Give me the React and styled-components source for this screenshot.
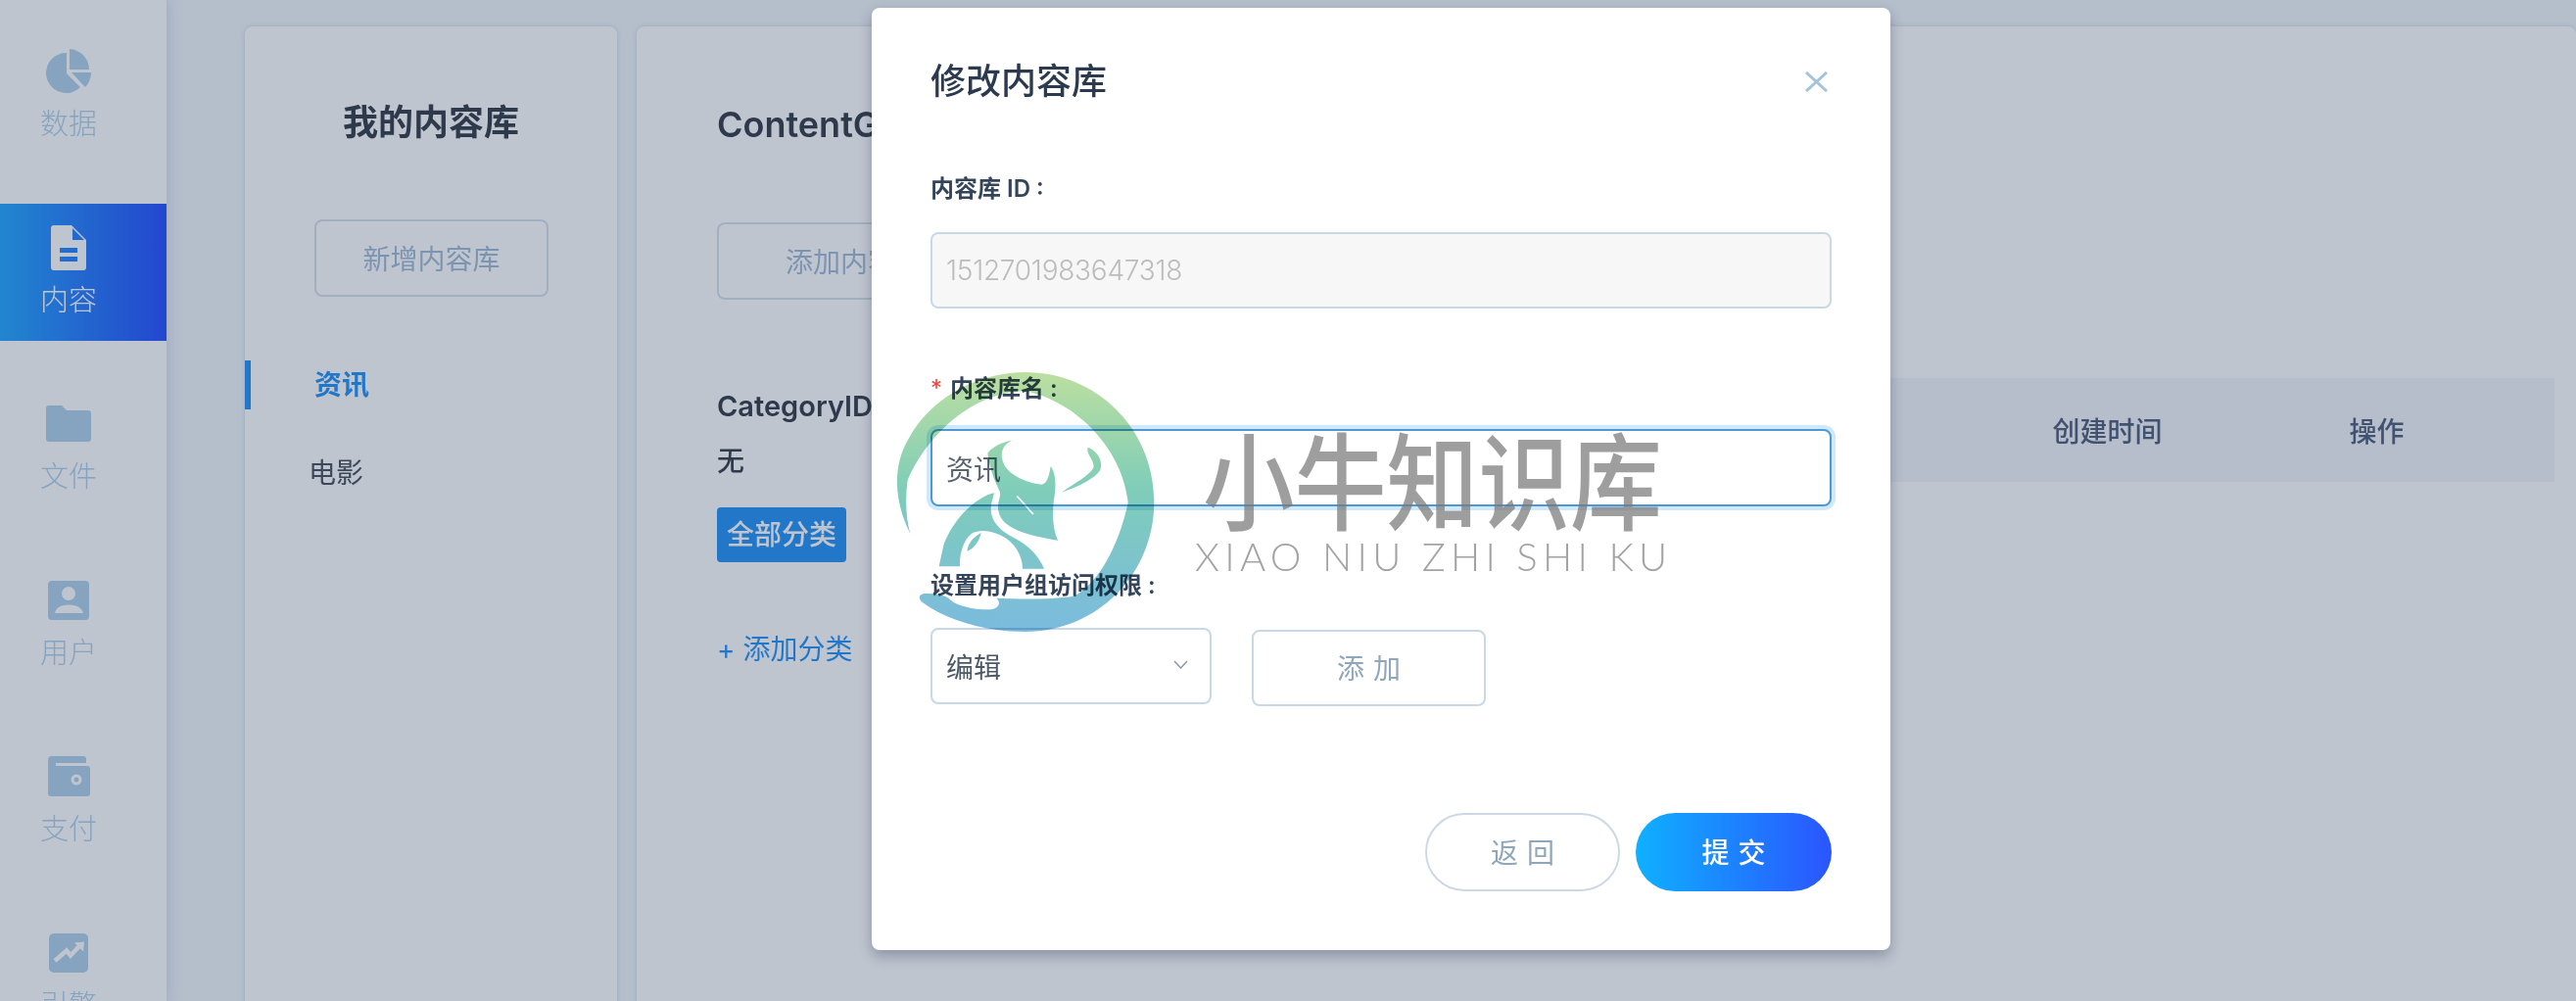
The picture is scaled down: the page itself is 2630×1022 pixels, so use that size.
import React from "react";
import styled, { createGlobalStyle } from "styled-components";

const FONT = `Inter, "Noto Sans CJK SC", "Noto Sans", sans-serif`;

const Global = createGlobalStyle`
  html, body { margin: 0; padding: 0; height: 100%; overflow: hidden; background: #f1f5fa; }
  #root { height: 100%; }
  * { box-sizing: border-box; }
`;

const Page = styled.div`
  position: relative;
  display: flex;
  width: 2630px;
  height: 1022px;
  overflow: hidden;
  background: #f1f5fa;
  font-family: ${FONT};
  color: #363f4a;
`;

const Sidebar = styled.nav`
  flex: none;
  width: 170px;
  height: 1022px;
  padding-top: 28px;
  display: flex;
  flex-direction: column;
  gap: 40px;
  background: #fff;
  box-shadow: 3px 0 12px rgba(120, 150, 190, 0.22);
  overflow: hidden;
`;

const NavItem = styled.div`
  flex: none;
  height: 140px;
  padding-left: 41px;
  display: flex;
  flex-direction: column;
  justify-content: center;
  background: ${(p) => (p.$active ? "linear-gradient(90deg, #25a8ff, #2951ff)" : "transparent")};
  color: ${(p) => (p.$active ? "#fff" : "#b0d0ea")};
`;

const NavIcon = styled.div`
  width: 58px;
  height: 46px;
  display: flex;
  align-items: center;
  justify-content: center;
  svg { display: block; }
`;

const NavLabel = styled.div`
  width: 58px;
  margin-top: 11px;
  font-size: 29px;
  line-height: 40px;
  font-weight: 300;
  text-align: center;
  white-space: nowrap;
`;

const Main = styled.main`
  flex: 1;
  min-width: 0;
  padding: 27px 0 0 80px;
  display: flex;
  gap: 20px;
`;

const Card = styled.section`
  background: #fff;
  border-radius: 8px 8px 0 0;
  box-shadow: 0 0 4px rgba(130, 160, 200, 0.35);
`;

const LibraryCard = styled(Card)`
  flex: none;
  width: 380px;
  height: 1100px;
  padding-top: 73px;
  display: flex;
  flex-direction: column;
`;

const CardTitle = styled.h2`
  margin: 0;
  font-size: 36px;
  line-height: 50px;
  font-weight: 600;
  text-align: ${(p) => p.$align || "left"};
  white-space: nowrap;
`;

const GhostButton = styled.button`
  display: block;
  padding: 0 0 2px;
  font-family: inherit;
  font-size: 28px;
  height: 79px;
  background: transparent;
  border: 2px solid #d6e1ec;
  border-radius: 8px;
  color: #a2bbd6;
  width: ${(p) => p.$w}px;
  letter-spacing: ${(p) => p.$ls || 0}px;
  text-indent: ${(p) => p.$ls || 0}px;
`;

const NewLibrary = styled(GhostButton)`
  margin: 74px 0 65px 71px;
`;

const LibraryRow = styled.div`
  height: 50px;
  margin-bottom: 40px;
  padding-left: 65px;
  font-size: 28px;
  line-height: 50px;
  font-weight: ${(p) => (p.$active ? 600 : 400)};
  color: ${(p) => (p.$active ? "#2894f6" : "#4a535e")};
  border-left: ${(p) => (p.$active ? "6px solid #2894f6" : "none")};
`;

const ContentCard = styled(Card)`
  flex: 1;
  min-width: 0;
  height: 1100px;
  display: flex;
`;

const GroupColumn = styled.div`
  flex: none;
  width: 450px;
  padding: 75px 0 0 82px;
`;

const AddGroup = styled(GhostButton)`
  margin: 75px 0 89px;
`;

const CategoryLabel = styled.div`
  font-size: 29px;
  line-height: 40px;
  font-weight: 600;
`;

const NoneText = styled.div`
  margin-top: 16px;
  font-size: 28px;
  line-height: 40px;
  font-weight: 500;
`;

const AllCategories = styled.div`
  width: 132px;
  height: 56px;
  margin-top: 27px;
  border-radius: 4px;
  background: #2894f6;
  color: #fff;
  font-size: 28px;
  font-weight: 500;
  line-height: 56px;
  text-align: center;
`;

const AddCategory = styled.div`
  margin-top: 69px;
  font-size: 28px;
  line-height: 40px;
  color: #2894f6;
`;

const TableColumn = styled.div`
  flex: 1;
  min-width: 0;
  padding: 359px 22px 0 0;
`;

const TableHead = styled.div`
  display: grid;
  grid-template-columns: 1fr 275px 275px 44px;
  height: 106px;
  align-items: center;
  background: #f4f5fa;
  font-size: 28px;
  font-weight: 500;
  color: #4f607a;
  text-align: center;
`;

const Backdrop = styled.div`
  position: absolute;
  inset: 0;
  display: flex;
  align-items: flex-start;
  justify-content: center;
  padding: 8px 0 0 190px;
  background: rgba(26, 45, 82, 0.28);
`;

const Modal = styled.div`
  width: 1040px;
  height: 962px;
  padding: 50px 60px 60px 60px;
  background: #fff;
  border-radius: 8px;
  box-shadow: 0 6px 14px rgba(30, 45, 70, 0.32);
  display: flex;
  flex-direction: column;
`;

const ModalHead = styled.div`
  display: flex;
  align-items: center;
  justify-content: space-between;
  height: 50px;
`;

const ModalTitle = styled.h3`
  margin: 0;
  font-size: 36px;
  line-height: 50px;
  font-weight: 500;
  color: #2b3a4e;
`;

const CloseIcon = styled.svg`
  display: block;
  margin-right: 4px;
`;

const FieldLabel = styled.label`
  display: block;
  margin-top: ${(p) => p.$top}px;
  height: 34px;
  font-size: 24px;
  line-height: 34px;
  font-weight: 600;
  color: #34445a;
`;

const Required = styled.span`
  color: #e8443a;
  margin-right: 8px;
  font-weight: 400;
`;

const TextField = styled.input`
  display: block;
  width: 100%;
  padding: 0 14px;
  font-family: inherit;
  font-size: 28px;
  outline: none;
  border-radius: 8px;
  margin-top: ${(p) => p.$top}px;
  height: ${(p) => p.$h}px;
  &:disabled {
    background: #f7f7f7;
    border: 2px solid #c8d8e6;
    color: #bcbcbc;
    -webkit-text-fill-color: #bcbcbc;
    opacity: 1;
    font-weight: 300;
    letter-spacing: -0.25px;
  }
  &:not(:disabled) {
    background: #fff;
    border: 2px solid #4b9ad6;
    color: #5a6470;
    box-shadow: 0 0 0 4px #cfe9fb;
  }
`;

const AccessRow = styled.div`
  display: flex;
  align-items: flex-start;
  gap: 41px;
  margin-top: 26px;
`;

const Select = styled.div`
  width: 287px;
  height: 78px;
  padding: 0 14px;
  border: 2px solid #c8d8e6;
  border-radius: 8px;
  display: flex;
  align-items: center;
  justify-content: space-between;
  font-size: 28px;
  color: #4d5866;
`;

const Chevron = styled.svg`
  display: block;
  margin: -4px 8px 0 0;
`;

const AddButton = styled(GhostButton)`
  height: 78px;
  margin-top: 2px;
  color: #8fa6bb;
  border-color: #c8d8e6;
`;

const Footer = styled.div`
  display: flex;
  justify-content: flex-end;
  gap: 16px;
  margin-top: 109px;
`;

const PillButton = styled.button`
  width: ${(p) => (p.$primary ? 200 : 199)}px;
  height: 80px;
  padding: 0 0 2px;
  border-radius: 40px;
  font-family: inherit;
  font-size: 28px;
  letter-spacing: 9px;
  text-indent: 9px;
  background: ${(p) => (p.$primary ? "linear-gradient(90deg, #0fb0ff, #2b55ff)" : "#fff")};
  border: ${(p) => (p.$primary ? "none" : "2px solid #ccd9e5")};
  color: ${(p) => (p.$primary ? "#fff" : "#8fa6bb")};
  font-weight: ${(p) => (p.$primary ? 500 : 400)};
`;

const Watermark = styled.div`
  position: absolute;
  left: 900px;
  top: 370px;
  width: 810px;
  height: 290px;
  pointer-events: none;
`;

const WatermarkLogo = styled.svg`
  position: absolute;
  left: 0;
  top: 0;
  mix-blend-mode: multiply;
`;

const WatermarkName = styled.div`
  position: absolute;
  left: 328px;
  top: 62px;
  font-family: "Noto Sans CJK SC", sans-serif;
  font-size: 108px;
  line-height: 108px;
  font-weight: 500;
  color: rgba(120, 120, 120, 0.72);
  white-space: nowrap;
  transform: scaleX(0.868);
  transform-origin: left top;
`;

const WatermarkPinyin = styled.div`
  position: absolute;
  left: 320px;
  top: 175px;
  font-family: Lato, sans-serif;
  font-size: 40px;
  line-height: 46px;
  font-weight: 300;
  letter-spacing: 5.3px;
  color: rgba(120, 120, 120, 0.68);
  white-space: nowrap;
`;

const PieIcon = () => (
  <svg width="46" height="46" viewBox="0 0 46 46" fill="currentColor">
    <path d="M21 4V25L35 39A20.5 20.5 0 1 1 21 4Z" />
    <path d="M24 0V21H44A21 21 0 0 0 24 0Z" />
    <path d="M26 24H46A22 22 0 0 1 40 39Z" />
  </svg>
);

const DocIcon = () => (
  <svg width="36" height="46" viewBox="0 0 36 46" fill="currentColor" fillRule="evenodd">
    <path d="M3 0H21L36 15V43A3 3 0 0 1 33 46H3A3 3 0 0 1 0 43V3A3 3 0 0 1 3 0ZM22 3V15H34ZM9 23V28H27V23ZM9 32V37H27V32Z" />
  </svg>
);

const FolderIcon = () => (
  <svg width="46" height="37" viewBox="0 0 46 37" fill="currentColor">
    <path d="M3 0H16L21 5H43A3 3 0 0 1 46 8V34A3 3 0 0 1 43 37H3A3 3 0 0 1 0 34V3A3 3 0 0 1 3 0Z" />
  </svg>
);

const UserIcon = () => (
  <svg width="42" height="40" viewBox="0 0 42 40" fill="currentColor" fillRule="evenodd">
    <path d="M4 0H38A4 4 0 0 1 42 4V36A4 4 0 0 1 38 40H4A4 4 0 0 1 0 36V4A4 4 0 0 1 4 0ZM21 6A7 7 0 1 0 21 20A7 7 0 1 0 21 6ZM7 33H36C35 27 28 24.5 21 24.5C14 24.5 8 27 7 33Z" />
  </svg>
);

const WalletIcon = () => (
  <svg width="43" height="41" viewBox="0 0 43 41" fill="currentColor" fillRule="evenodd">
    <path d="M4 0H36A3 3 0 0 1 39 3V7H8V10H40A3 3 0 0 1 43 13V38A3 3 0 0 1 40 41H3A3 3 0 0 1 0 38V4A4 4 0 0 1 4 0ZM29 18.500A5.500 5.500 0 1 0 29 29.500A5.500 5.500 0 1 0 29 18.500ZM29 21.500A2.500 2.500 0 1 1 29 26.500A2.500 2.500 0 1 1 29 21.500Z" />
  </svg>
);

const TrendIcon = () => (
  <svg width="40" height="40" viewBox="0 0 40 40">
    <rect width="40" height="40" rx="5" fill="currentColor" />
    <path d="M6 28L18 17.500L22 22.500L31 13" fill="none" stroke="#fff" strokeWidth="4.500" />
    <path d="M26 9.500L36 8.500L35 18.500Z" fill="#fff" />
  </svg>
);

const NAV = [
  { label: "数据", icon: <PieIcon /> },
  { label: "内容", icon: <DocIcon />, active: true },
  { label: "文件", icon: <FolderIcon /> },
  { label: "用户", icon: <UserIcon /> },
  { label: "支付", icon: <WalletIcon /> },
  { label: "引擎", icon: <TrendIcon /> },
];

const Logo = () => (
  <WatermarkLogo width="300" height="290" viewBox="0 0 900 870">
    <defs>
      <linearGradient id="wmGrad" x1="0" y1="30" x2="0" y2="825" gradientUnits="userSpaceOnUse">
        <stop offset="0" stopColor="#bcdf9f" />
        <stop offset="0.45" stopColor="#7fcdb9" />
        <stop offset="1" stopColor="#7bbbde" />
      </linearGradient>
    </defs>
    <g fill="url(#wmGrad)">
      <path d="M88 525C40 430 30 320 85 230C155 105 300 30 440 30C660 30 835 205 835 427C835 650 660 825 440 825C320 825 200 790 125 735C110 722 115 708 135 708C165 708 190 712 205 722C225 745 280 758 335 757C362 752 366 735 352 722C430 726 520 726 590 716C660 680 725 570 755 430C740 270 600 120 440 88C300 88 150 200 80 360C72 420 75 480 88 525Z" />
      <path d="M400 238C370 255 358 280 378 318C395 345 440 368 490 374C508 372 514 345 518 318C535 340 535 380 528 420C522 470 525 510 540 545C500 540 460 530 430 520C395 505 365 490 358 455C352 430 368 410 362 395C345 360 330 320 325 278C340 258 370 245 400 238Z" />
      <path d="M632 260C660 270 680 300 670 330C650 360 590 385 552 398C590 370 640 345 650 320C650 295 625 280 632 260Z" />
      <path d="M345 400C280 415 215 490 190 560L176 625H240C238 590 250 545 275 525C300 510 340 515 375 535C405 552 432 590 432 632H498C480 590 450 560 405 537C370 520 335 490 335 450C335 430 342 415 345 400Z" />
      <path d="M305 522C280 535 265 555 262 578C285 570 300 545 305 522Z" />
    </g>
    <path d="M415 410C435 430 450 450 465 465" fill="none" stroke="#fff" strokeWidth="5" />
  </WatermarkLogo>
);

export default function App() {
  return (
    <Page>
      <Global />
      <Sidebar>
        {NAV.map((n) => (
          <NavItem key={n.label} $active={n.active}>
            <NavIcon>{n.icon}</NavIcon>
            <NavLabel>{n.label}</NavLabel>
          </NavItem>
        ))}
      </Sidebar>
      <Main>
        <LibraryCard>
          <CardTitle $align="center">我的内容库</CardTitle>
          <NewLibrary $w={239}>新增内容库</NewLibrary>
          <LibraryRow $active>资讯</LibraryRow>
          <LibraryRow>电影</LibraryRow>
        </LibraryCard>
        <ContentCard>
          <GroupColumn>
            <CardTitle>ContentGroup</CardTitle>
            <AddGroup $w={280}>添加内容组</AddGroup>
            <CategoryLabel>CategoryID</CategoryLabel>
            <NoneText>无</NoneText>
            <AllCategories>全部分类</AllCategories>
            <AddCategory>+ 添加分类</AddCategory>
          </GroupColumn>
          <TableColumn>
            <TableHead>
              <span>标题</span>
              <span>创建时间</span>
              <span>操作</span>
              <span />
            </TableHead>
          </TableColumn>
        </ContentCard>
      </Main>
      <Backdrop>
        <Modal>
          <ModalHead>
            <ModalTitle>修改内容库</ModalTitle>
            <CloseIcon width="23" height="21" viewBox="0 0 23 21" fill="none" stroke="#a3c4d9" strokeWidth="3">
              <path d="M1 1L22 20M22 1L1 20" />
            </CloseIcon>
          </ModalHead>
          <FieldLabel $top={68}>内容库 ID :</FieldLabel>
          <TextField $top={27} $h={78} disabled value="1512701983647318" readOnly />
          <FieldLabel $top={65}>
            <Required>*</Required>内容库名 :
          </FieldLabel>
          <TextField $top={24} $h={79} value="资讯" readOnly />
          <FieldLabel $top={64}>设置用户组访问权限 :</FieldLabel>
          <AccessRow>
            <Select>
              <span>编辑</span>
              <Chevron width="15" height="9" viewBox="0 0 15 9" fill="none" stroke="#8b9aa9" strokeWidth="1.500">
                <path d="M1 1L7.500 8L14 1" />
              </Chevron>
            </Select>
            <AddButton $w={239} $ls={9}>添加</AddButton>
          </AccessRow>
          <Footer>
            <PillButton>返回</PillButton>
            <PillButton $primary>提交</PillButton>
          </Footer>
        </Modal>
      </Backdrop>
      <Watermark>
        <Logo />
        <WatermarkName>小牛知识库</WatermarkName>
        <WatermarkPinyin>XIAO NIU ZHI SHI KU</WatermarkPinyin>
      </Watermark>
    </Page>
  );
}
